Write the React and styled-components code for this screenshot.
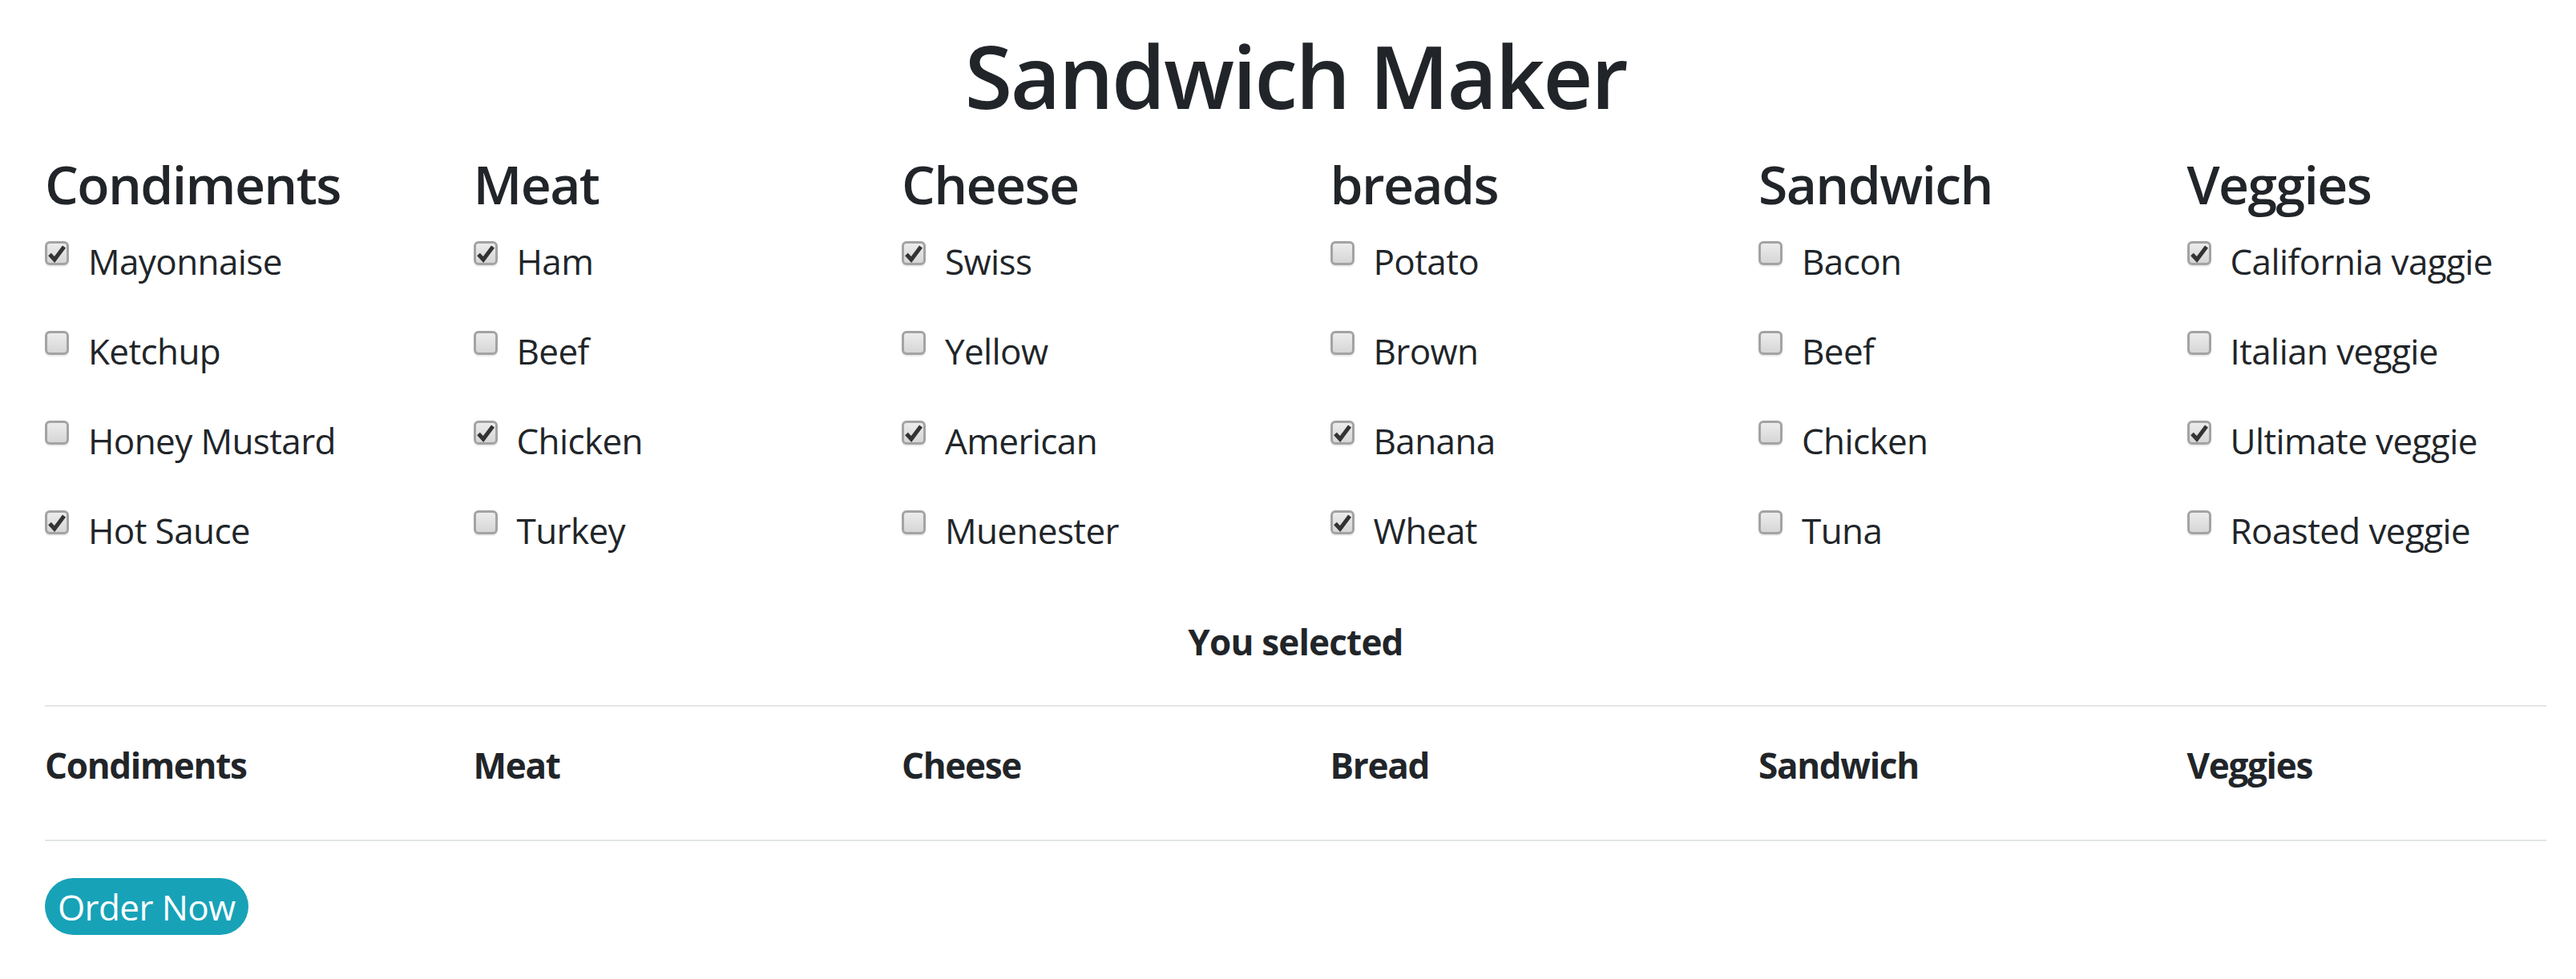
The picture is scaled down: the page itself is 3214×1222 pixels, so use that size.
import React, { useState } from "react";
import styled, { createGlobalStyle } from "styled-components";

const GlobalStyle = createGlobalStyle`
  html, body { margin: 0; padding: 0; background: #ffffff; }
  body {
    font-family: "Segoe UI", "Open Sans", "Noto Sans", sans-serif;
    color: #212529;
    -webkit-font-smoothing: antialiased;
  }
  * { box-sizing: border-box; }
`;

const Page = styled.div`
  padding: 29px 37px 40px 56px;
`;

const Title = styled.h1`
  margin: 0;
  font-size: 108px;
  font-weight: 600;
  line-height: 132px;
  letter-spacing: -2.4px;
  text-align: center;
`;

const ColumnsGrid = styled.div`
  display: grid;
  grid-template-columns: repeat(5, 534.5px) 1fr;
  margin-top: 29px;
`;

const Column = styled.section`
  display: flex;
  flex-direction: column;
`;

const ColumnHeading = styled.h2`
  margin: 0 0 24px;
  font-size: 66px;
  font-weight: 600;
  line-height: 79px;
  letter-spacing: -1.6px;
  white-space: nowrap;
`;

const OptionList = styled.div`
  display: flex;
  flex-direction: column;
  gap: 46px;
`;

const Option = styled.label`
  display: flex;
  align-items: flex-start;
  gap: 24px;
  font-size: 44px;
  line-height: 66px;
  letter-spacing: -0.6px;
  white-space: nowrap;
  cursor: pointer;
`;

const HiddenInput = styled.input`
  position: absolute;
  opacity: 0;
  width: 0;
  height: 0;
`;

const Box = styled.span`
  flex: none;
  width: 30px;
  height: 30px;
  margin-top: 8px;
  border: 3px solid #a3a3a3;
  border-radius: 6px;
  background: linear-gradient(#ececec, #d6d6d6);
  box-shadow: 0 2px 0 #ececec;
  display: flex;
  align-items: center;
  justify-content: center;
`;

const Selected = styled.div`
  margin-top: 73px;
  font-size: 44px;
  line-height: 66px;
  font-weight: 700;
  letter-spacing: -0.8px;
  text-align: center;
`;

const SummaryTable = styled.div`
  margin-top: 46px;
  border-top: 2px solid #e3e5e8;
  border-bottom: 2px solid #e3e5e8;
  padding: 40px 0 60px;
  display: grid;
  grid-template-columns: repeat(5, 534.5px) 1fr;
`;

const SummaryHeader = styled.div`
  font-size: 44px;
  line-height: 66px;
  font-weight: 700;
  letter-spacing: -1.3px;
  white-space: nowrap;
`;

const OrderButton = styled.button`
  margin-top: 46px;
  height: 71px;
  padding: 0 16px;
  border: none;
  border-radius: 36px;
  background: #17a2b8;
  color: #ffffff;
  font-family: inherit;
  font-size: 44px;
  line-height: 66px;
  letter-spacing: -0.6px;
  cursor: pointer;
`;

const Check = () => (
  <svg width="24" height="24" viewBox="0 0 24 24" aria-hidden="true">
    <path
      d="M3 13.5 L9 20 L21 4"
      fill="none"
      stroke="#333"
      strokeWidth="5"
      strokeLinejoin="miter"
      strokeLinecap="butt"
    />
  </svg>
);

const initial = [
  {
    title: "Condiments",
    summary: "Condiments",
    items: [
      ["Mayonnaise", true],
      ["Ketchup", false],
      ["Honey Mustard", false],
      ["Hot Sauce", true],
    ],
  },
  {
    title: "Meat",
    summary: "Meat",
    items: [
      ["Ham", true],
      ["Beef", false],
      ["Chicken", true],
      ["Turkey", false],
    ],
  },
  {
    title: "Cheese",
    summary: "Cheese",
    items: [
      ["Swiss", true],
      ["Yellow", false],
      ["American", true],
      ["Muenester", false],
    ],
  },
  {
    title: "breads",
    summary: "Bread",
    items: [
      ["Potato", false],
      ["Brown", false],
      ["Banana", true],
      ["Wheat", true],
    ],
  },
  {
    title: "Sandwich",
    summary: "Sandwich",
    items: [
      ["Bacon", false],
      ["Beef", false],
      ["Chicken", false],
      ["Tuna", false],
    ],
  },
  {
    title: "Veggies",
    summary: "Veggies",
    items: [
      ["California vaggie", true],
      ["Italian veggie", false],
      ["Ultimate veggie", true],
      ["Roasted veggie", false],
    ],
  },
];

export default function App() {
  const [groups, setGroups] = useState(initial);

  const toggle = (gi, ii) => {
    setGroups((prev) =>
      prev.map((g, a) =>
        a !== gi
          ? g
          : {
              ...g,
              items: g.items.map((it, b) => (b === ii ? [it[0], !it[1]] : it)),
            }
      )
    );
  };

  return (
    <Page>
      <GlobalStyle />
      <Title>Sandwich Maker</Title>
      <ColumnsGrid>
        {groups.map((g, gi) => (
          <Column key={g.title}>
            <ColumnHeading>{g.title}</ColumnHeading>
            <OptionList>
              {g.items.map(([name, checked], ii) => (
                <Option key={name}>
                  <HiddenInput
                    type="checkbox"
                    checked={checked}
                    onChange={() => toggle(gi, ii)}
                  />
                  <Box>{checked && <Check />}</Box>
                  {name}
                </Option>
              ))}
            </OptionList>
          </Column>
        ))}
      </ColumnsGrid>
      <Selected>You selected</Selected>
      <SummaryTable>
        {groups.map((g) => (
          <SummaryHeader key={g.summary}>{g.summary}</SummaryHeader>
        ))}
      </SummaryTable>
      <OrderButton type="button">Order Now</OrderButton>
    </Page>
  );
}
